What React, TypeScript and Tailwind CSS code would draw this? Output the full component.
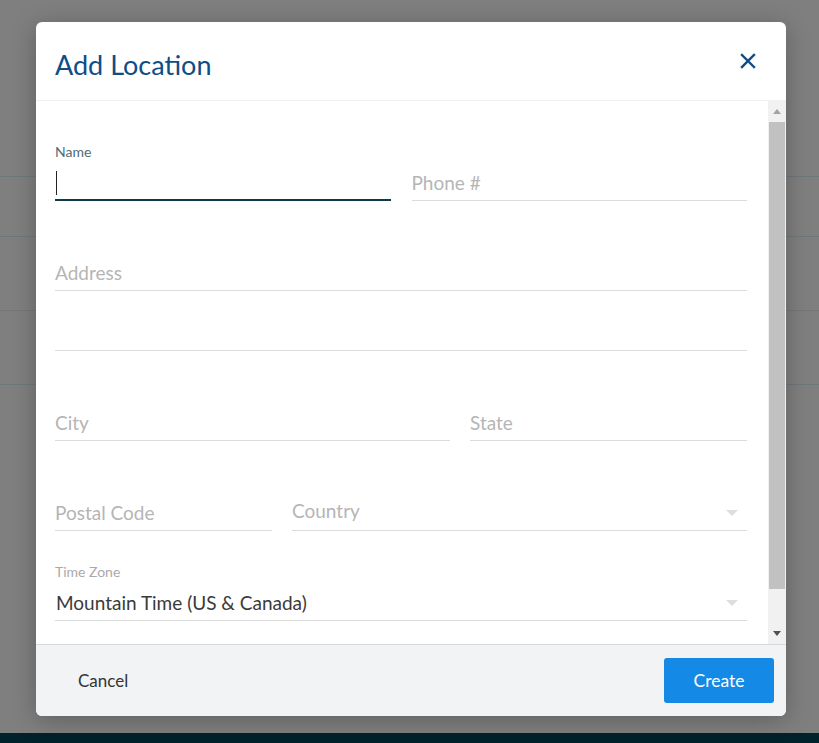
import { useState } from 'react';

// Add Location dialog over a dimmed page. The body scrollbar is drawn by hand
// so the picture does not depend on how the headless browser paints scrollbars.

const FONT = { fontFamily: 'Lato, "Open Sans", sans-serif' };

function Field({
  label,
  placeholder,
  value,
  focused,
  select,
  raised,
  className = '',
}: {
  label?: string;
  placeholder?: string;
  value?: string;
  focused?: boolean;
  select?: boolean;
  raised?: boolean;
  className?: string;
}) {
  return (
    <div className={`flex flex-col ${className}`}>
      <div className={`h-4 text-[14px] leading-4 ${focused ? 'text-[#4f6b78]' : 'text-[#a9a9a9]'}`}>{label ?? ''}</div>
      <div
        className={`mt-[6px] flex h-[35px] items-center ${
          focused ? 'border-b-2 border-[#0d3a48]' : 'border-b border-[#dcdcdc]'
        }`}
      >
        {focused ? (
          <span className="ml-px h-6 w-px bg-[#222]" />
        ) : value ? (
          <span className="pl-px text-[19px] text-[#3a3a3a]">{value}</span>
        ) : (
          <span className={`text-[19px] text-[#b5b5b5] ${raised ? '-translate-y-[2px]' : ''}`}>{placeholder}</span>
        )}
        {select && (
          <span className="ml-auto mr-[9px] h-0 w-0 border-x-[6px] border-t-[6px] border-x-transparent border-t-[#dedede]" />
        )}
      </div>
    </div>
  );
}

function FakeScrollbar() {
  return (
    <div className="flex w-[18px] flex-col items-center bg-[#f1f1f1]">
      <div className="flex h-[21px] items-center justify-center">
        <span className="h-0 w-0 border-x-[4px] border-b-[5px] border-x-transparent border-b-[#a3a3a3]" />
      </div>
      <div className="h-[467px] w-[16px] bg-[#c1c1c1]" />
      <div className="flex-1" />
      <div className="flex h-[21px] items-center justify-center">
        <span className="h-0 w-0 border-x-[4px] border-t-[5px] border-x-transparent border-t-[#505050]" />
      </div>
    </div>
  );
}

export default function App() {
  const [open] = useState(true);

  return (
    <div className="relative flex h-[743px] w-[819px] flex-col overflow-hidden bg-[#7f7f7f]" style={FONT}>
      {/* dimmed page behind */}
      <div className="flex-1">
        <div className="h-[176px]" />
        <div className="h-[60px] border-t border-[#6f767a]" />
        <div className="h-[74px] border-t border-[#6f767a]" />
        <div className="h-[74px] border-t border-[#73777a]" />
        <div className="border-t border-[#6f767a]" />
      </div>
      <div className="h-[10px] bg-[#00222b]" />

      {open && (
        <div className="absolute left-[36px] top-[22px] flex w-[750px] flex-col overflow-hidden rounded-[6px] bg-white shadow-[0_4px_24px_rgba(0,0,0,0.25)]">
          <div className="flex h-[79px] items-center justify-between border-b border-[#efefef] pl-[19px] pr-[30px]">
            <h1 className="pt-[8px] text-[27px] text-[#0e4d86]">Add Location</h1>
            <button type="button" className="mb-px text-[#0e4d86]" aria-label="Close">
              <svg width="16" height="16" viewBox="0 0 16 16" fill="none" stroke="currentColor" strokeWidth="2.4" strokeLinecap="square">
                <path d="M2 2 L14 14 M14 2 L2 14" />
              </svg>
            </button>
          </div>

          <div className="flex h-[543px]">
            <div className="flex-1 overflow-hidden pl-[19px] pr-[21px] pt-[43px]">
              <div className="flex gap-[21px]">
                <Field label="Name" focused className="flex-1" />
                <Field placeholder="Phone #" className="flex-1" />
              </div>
              <Field placeholder="Address" className="mt-[33px]" />
              <div className="mt-[4px] h-[56px] border-b border-[#dcdcdc]" />
              <div className="mt-[33px] flex gap-[20px]">
                <Field placeholder="City" className="w-[395px]" />
                <Field placeholder="State" className="flex-1" />
              </div>
              <div className="mt-[33px] flex gap-[20px]">
                <Field placeholder="Postal Code" className="w-[217px]" />
                <Field placeholder="Country" select raised className="flex-1" />
              </div>
              <Field label="Time Zone" value="Mountain Time (US & Canada)" select className="mt-[33px]" />
            </div>
            <FakeScrollbar />
          </div>

          <div className="flex h-[72px] items-center justify-between border-t border-[#d6dadf] bg-[#f2f3f5] pl-[42px] pr-[12px]">
            <button type="button" className="text-[17px] text-[#333]">Cancel</button>
            <button type="button" className="h-[45px] w-[110px] rounded-[3px] bg-[#1589e6] pt-px text-[17.5px] text-white">
              Create
            </button>
          </div>
        </div>
      )}
    </div>
  );
}
